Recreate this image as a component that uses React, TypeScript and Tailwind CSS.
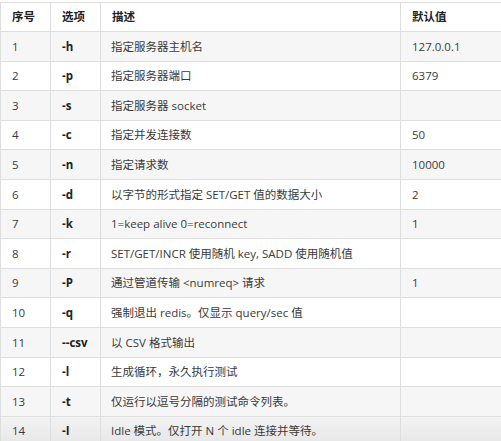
const rows = [
  ["1", "-h", "指定服务器主机名", "127.0.0.1"],
  ["2", "-p", "指定服务器端口", "6379"],
  ["3", "-s", "指定服务器 socket", ""],
  ["4", "-c", "指定并发连接数", "50"],
  ["5", "-n", "指定请求数", "10000"],
  ["6", "-d", "以字节的形式指定 SET/GET 值的数据大小", "2"],
  ["7", "-k", "1=keep alive 0=reconnect", "1"],
  ["8", "-r", "SET/GET/INCR 使用随机 key, SADD 使用随机值", ""],
  ["9", "-P", "通过管道传输 <numreq> 请求", "1"],
  ["10", "-q", "强制退出 redis。仅显示 query/sec 值", ""],
  ["11", "--csv", "以 CSV 格式输出", ""],
  ["12", "-l", "生成循环，永久执行测试", ""],
  ["13", "-t", "仅运行以逗号分隔的测试命令列表。", ""],
  ["14", "-I", "Idle 模式。仅打开 N 个 idle 连接并等待。", ""],
]

export default function App() {
  return (
    <div className="w-[501px] h-[441px] overflow-hidden bg-white pt-[2px] text-[11.5px] text-[#3a3a3a] font-['Open_Sans','Noto_Sans_CJK_SC',sans-serif]">
      <table className="w-[501px] border-collapse table-fixed">
        <colgroup>
          <col className="w-[50px]" />
          <col className="w-[50px]" />
          <col className="w-[300px]" />
          <col className="w-[101px]" />
        </colgroup>
        <thead>
          <tr className="h-[29px] bg-white">
            {["序号", "选项", "描述", "默认值"].map((h) => (
              <th key={h} className="border border-[#dedede] px-[11px] text-left font-bold text-[#222]">
                {h}
              </th>
            ))}
          </tr>
        </thead>
        <tbody>
          {rows.map((r, i) => (
            <tr
              key={r[0]}
              className={
                i === 13
                  ? "h-[29.6px] bg-gradient-to-b from-[#f3f3f3] to-[#e6e6e6]"
                  : i % 2 === 0
                    ? "h-[29.6px] bg-[#f6f6f6]"
                    : "h-[29.6px] bg-white"
              }
            >
              <td className="border border-[#dedede] px-[11px]">{r[0]}</td>
              <td className="border border-[#dedede] px-[11px] font-bold text-[#222]">{r[1]}</td>
              <td className="border border-[#dedede] px-[10px] whitespace-nowrap">{r[2]}</td>
              <td className="border border-[#dedede] px-[11px]">{r[3]}</td>
            </tr>
          ))}
        </tbody>
      </table>
    </div>
  )
}
